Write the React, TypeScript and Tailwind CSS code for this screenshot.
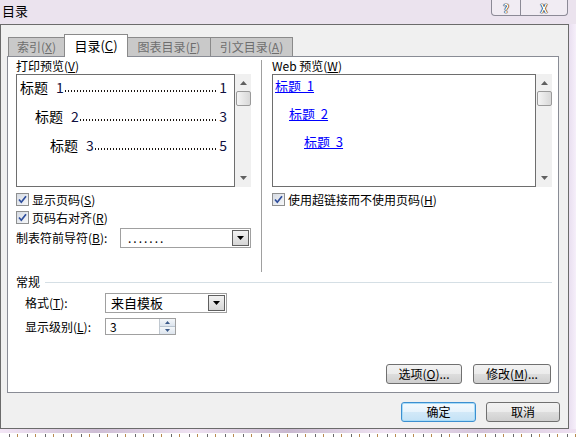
import React from "react";

function K({ c }: { c: string }) {
  return (
    <span>
      (<span className="underline">{c}</span>)
    </span>
  );
}

function Check() {
  return (
    <span className="w-[13px] h-[13px] shrink-0 border border-[#8e8f8f] bg-[linear-gradient(135deg,#d6dbe3,#f6f7f9)] flex items-center justify-center">
      <svg width="9" height="9" viewBox="0 0 9 9">
        <path d="M1 4.5 L3.3 7.2 L8 1.2" stroke="#2d4d9c" strokeWidth="1.7" fill="none" />
      </svg>
    </span>
  );
}

function Arrow({ up }: { up?: boolean }) {
  return (
    <svg width="7" height="4" viewBox="0 0 7 4">
      <path d={up ? "M0 4 L3.5 0 L7 4 Z" : "M0 0 L3.5 4 L7 0 Z"} fill="#606060" />
    </svg>
  );
}

function ScrollBar() {
  return (
    <div className="w-[16px] h-full bg-[#f0f0f0] flex flex-col items-center">
      <div className="mt-[7px] flex">
        <Arrow up />
      </div>
      <div className="mt-[6px] w-[15px] h-[15px] rounded-[2px] border border-[#9a9a9a] bg-[linear-gradient(90deg,#f4f4f4,#d8d8d8)]" />
      <div className="flex-1" />
      <div className="mb-[7px] flex">
        <Arrow />
      </div>
    </div>
  );
}

function DropBtn() {
  return (
    <div className="w-[17px] h-full border border-[#5f5f5f] bg-[linear-gradient(180deg,#f2f2f2,#d6d6d6)] flex items-center justify-center">
      <svg width="7" height="4" viewBox="0 0 7 4">
        <path d="M0 0 L3.5 4 L7 0 Z" fill="#000" />
      </svg>
    </div>
  );
}

function Dots() {
  return (
    <span className="flex-1 h-[2px] mb-[3px] mx-[1px] bg-[image:repeating-linear-gradient(90deg,#1a1410_0px,#1a1410_1px,transparent_1px,transparent_3px)]" />
  );
}

function PrintLine({ pad, n, p }: { pad: string; n: string; p: string }) {
  return (
    <div className={`h-[16px] flex items-end text-[14px] leading-[16px] pr-[7px] ${pad}`}>
      <span>标题</span>
      <span className="ml-[8px] text-[#101040]">{n}</span>
      <Dots />
      <span className="text-[#101040]">{p}</span>
    </div>
  );
}

function Btn({ children, cls }: { children: React.ReactNode; cls: string }) {
  return (
    <div
      className={`h-[20px] rounded-[3px] border border-[#707070] bg-[linear-gradient(180deg,#f2f2f2_0%,#ebebeb_50%,#dddddd_51%,#cfcfcf_100%)] flex items-center justify-center text-[12px] ${cls}`}
    >
      {children}
    </div>
  );
}

export default function App() {
  return (
    <div className="w-[576px] h-[437px] overflow-hidden bg-[#ebe3ee] font-[family-name:Noto_Sans_CJK_SC,sans-serif] text-[12px] text-black flex flex-col">
      {/* title bar */}
      <div className="h-[24px] shrink-0 flex">
        <div className="pl-[2px] pt-[3px] text-[13px] leading-[16px]">目录</div>
        <div className="ml-auto mr-[8px] flex h-[16px] border border-t-0 border-[#8c8a96] rounded-b-[4px] bg-[#f1ecf3]">
          <div className="w-[29px] flex items-center justify-center border-r border-[#8c8a96] text-[11px] leading-[14px] font-bold text-white [text-shadow:0_0_1px_#000,0_0_1px_#000,0_0_1px_#000]">
            ?
          </div>
          <div className="w-[46px] flex items-center justify-center text-[11px] leading-[14px] font-bold text-white [text-shadow:0_0_1px_#000,0_0_1px_#000,0_0_1px_#000]">
            X
          </div>
        </div>
      </div>

      <div className="flex h-[405px] shrink-0">
        {/* client area */}
        <div className="w-[569px] h-full shrink-0 border border-[#6b6b6b] bg-[#f0f0f0] flex flex-col pl-[6px] pr-[9px] pt-[9px]">
          {/* tabs */}
          <div className="h-[22px] flex items-end pl-[1px]">
            <div className="w-[57px] h-[19px] border border-b-0 border-[#8a8a8a] bg-[#c9c9c9] text-[#6e6e6e] flex items-center justify-center">
              索引<K c="X" />
            </div>
            <div className="w-[64px] h-[23px] -ml-px -mb-px relative z-10 border border-b-0 border-[#8a8a8a] bg-white flex items-center justify-center text-[13px]">
              目录<K c="C" />
            </div>
            <div className="w-[84px] h-[19px] -ml-px border border-b-0 border-[#8a8a8a] bg-[#c9c9c9] text-[#6e6e6e] flex items-center justify-center">
              图表目录<K c="F" />
            </div>
            <div className="w-[83px] h-[19px] -ml-px border border-b-0 border-[#8a8a8a] bg-[#c9c9c9] text-[#6e6e6e] flex items-center justify-center">
              引文目录<K c="A" />
            </div>
          </div>

          {/* panel */}
          <div className="w-[552px] h-[337px] shrink-0 border border-[#898c95] bg-white flex flex-col pl-[8px] pr-[6px]">
            <div className="h-[215px] flex">
              {/* left column */}
              <div className="w-[235px] pt-[3px] flex flex-col">
                <div className="h-[12px] leading-[12px]">
                  打印预览<K c="V" />
                </div>
                <div className="mt-[2px] h-[113px] flex">
                  <div className="w-[220px] h-full border border-[#6e6e6e] flex flex-col pt-[4px] gap-[13px]">
                    <PrintLine pad="pl-[3px]" n="1" p="1" />
                    <PrintLine pad="pl-[18px]" n="2" p="3" />
                    <PrintLine pad="pl-[33px]" n="3" p="5" />
                  </div>
                  <ScrollBar />
                </div>
                <div className="mt-[6px] h-[13px] flex items-center gap-[3px] leading-[13px]">
                  <Check />
                  <span>
                    显示页码<K c="S" />
                  </span>
                </div>
                <div className="mt-[5px] h-[13px] flex items-center gap-[3px] leading-[13px]">
                  <Check />
                  <span>
                    页码右对齐<K c="R" />
                  </span>
                </div>
                <div className="mt-[4px] h-[20px] flex items-center">
                  <span>
                    制表符前导符<K c="B" />:
                  </span>
                  <div className="ml-auto w-[131px] h-full border border-[#a0a0a0] bg-white flex items-stretch p-[1px]">
                    <span className="flex-1 pl-[6px] leading-[16px] tracking-[2px]">.......</span>
                    <DropBtn />
                  </div>
                </div>
              </div>

              {/* separator */}
              <div className="ml-[10px] mt-[3px] w-px h-[212px] bg-[#a0a0a0]" />

              {/* right column */}
              <div className="ml-[10px] w-[280px] pt-[3px] flex flex-col">
                <div className="h-[12px] leading-[12px]">
                  Web 预览<K c="W" />
                </div>
                <div className="mt-[2px] h-[113px] flex">
                  <div className="w-[264px] h-full border border-[#6e6e6e] flex flex-col pt-[4px] gap-[14px] text-[13px] leading-[14px] text-[#0000ff]">
                    <div className="h-[14px] pl-[2px]">
                      <span className="underline">标题&nbsp;&nbsp;1</span>
                    </div>
                    <div className="h-[14px] pl-[16px]">
                      <span className="underline">标题&nbsp;&nbsp;2</span>
                    </div>
                    <div className="h-[14px] pl-[31px]">
                      <span className="underline">标题&nbsp;&nbsp;3</span>
                    </div>
                  </div>
                  <ScrollBar />
                </div>
                <div className="mt-[6px] h-[13px] flex items-center gap-[3px] leading-[13px]">
                  <Check />
                  <span>
                    使用超链接而不使用页码<K c="H" />
                  </span>
                </div>
              </div>
            </div>

            {/* 常规 */}
            <div className="mt-[4px] h-[12px] flex items-center leading-[12px]">
              <span>常规</span>
              <div className="ml-[5px] flex-1 h-px bg-[#d5dfe5]" />
            </div>
            <div className="mt-[5px] h-[20px] flex items-center pl-[9px]">
              <span className="w-[80px]">
                格式<K c="T" />:
              </span>
              <div className="w-[122px] h-full border border-[#a0a0a0] bg-white flex items-stretch p-[1px]">
                <span className="flex-1 pl-[4px] text-[13px] leading-[16px]">来自模板</span>
                <DropBtn />
              </div>
            </div>
            <div className="mt-[5px] h-[17px] flex items-center pl-[9px]">
              <span className="w-[80px]">
                显示级别<K c="L" />:
              </span>
              <div className="w-[71px] h-full border border-[#a0a0a0] bg-white flex items-stretch">
                <span className="flex-1 pl-[4px] leading-[15px]">3</span>
                <div className="w-[16px] flex flex-col border-l border-[#c0c8d0]">
                  <div className="flex-1 bg-[linear-gradient(180deg,#f4f7fa,#dde5ee)] border-b border-[#b8c4d0] flex items-center justify-center">
                    <svg width="5" height="3" viewBox="0 0 5 3">
                      <path d="M0 3 L2.5 0 L5 3 Z" fill="#3b5a8a" />
                    </svg>
                  </div>
                  <div className="flex-1 bg-[linear-gradient(180deg,#f4f7fa,#dde5ee)] flex items-center justify-center">
                    <svg width="5" height="3" viewBox="0 0 5 3">
                      <path d="M0 0 L2.5 3 L5 0 Z" fill="#3b5a8a" />
                    </svg>
                  </div>
                </div>
              </div>
            </div>

            <div className="mt-[29px] flex justify-end gap-[11px] mr-[1px]">
              <Btn cls="w-[76px]">
                <span>
                  选项<K c="O" />...
                </span>
              </Btn>
              <Btn cls="w-[78px]">
                <span>
                  修改<K c="M" />...
                </span>
              </Btn>
            </div>
          </div>

          {/* bottom buttons */}
          <div className="mt-[9px] flex justify-end gap-[10px] -mr-px">
            <div className="w-[75px] h-[20px] rounded-[3px] border border-[#3c8fd0] bg-[linear-gradient(180deg,#f4fafe_0%,#e6f3fc_50%,#d2e9f8_51%,#c4e2f6_100%)] flex items-center justify-center shadow-[inset_0_0_0_1px_#a8dcf8]">
              确定
            </div>
            <Btn cls="w-[74px]">取消</Btn>
          </div>
        </div>

        {/* right frame */}
        <div className="flex-1 h-full bg-[linear-gradient(90deg,#e9dff0,#f6effa)]" />
      </div>

      {/* bottom frame */}
      <div className="h-[4px] shrink-0 bg-[linear-gradient(90deg,#f3e6f6,#cdbdd4,#efe2f2,#c8b8cf,#f0e4f3,#d4c4da,#eee0f1)]" />
      <div className="h-px shrink-0 bg-white" />
      <div className="flex-1 bg-white bg-[image:repeating-linear-gradient(90deg,#ffffff_0px,#ffffff_9px,#6a6a6a_9px,#6a6a6a_10px,#ffffff_10px,#ffffff_17px,#b88a50_17px,#b88a50_18px)]" />
    </div>
  );
}
